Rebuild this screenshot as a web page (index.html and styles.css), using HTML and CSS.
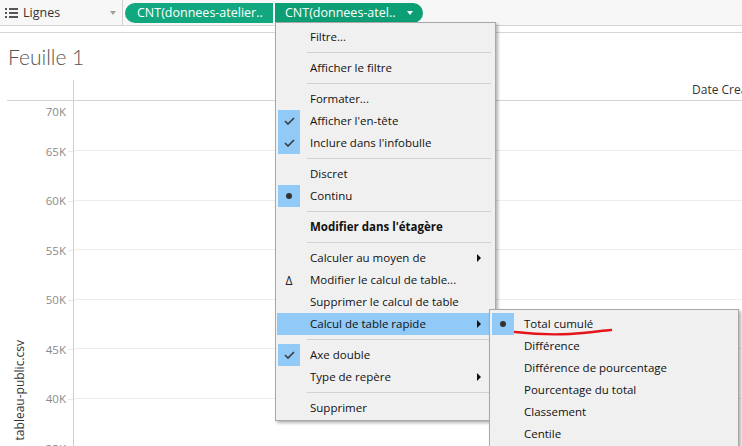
FILE: index.html
```html
<!DOCTYPE html>
<html lang="fr">
<head>
<meta charset="utf-8">
<title>Feuille 1</title>
<link rel="stylesheet" href="styles.css">
</head>
<body>
<div class="app">
  <div class="topbar">
    <div class="shelf-label">
      <svg class="list-icon" width="13" height="10" viewBox="0 0 13 10">
        <rect x="0" y="0" width="2" height="2" fill="#555"/><rect x="4" y="0" width="9" height="2" fill="#555"/>
        <rect x="0" y="4" width="2" height="2" fill="#555"/><rect x="4" y="4" width="9" height="2" fill="#555"/>
        <rect x="0" y="8" width="2" height="2" fill="#555"/><rect x="4" y="8" width="9" height="2" fill="#555"/>
      </svg>
      <span class="shelf-name">Lignes</span>
      <span class="shelf-arrow"></span>
    </div>
    <div class="pills">
      <div class="pill pill-left">CNT(donnees-atelier..</div>
      <div class="pill pill-right">CNT(donnees-atel.. <span class="pill-arrow"></span></div>
    </div>
  </div>
  <div class="strip"></div>
  <div class="sheet">
    <h1 class="sheet-title">Feuille 1</h1>
    <div class="chart">
      <div class="head-left"></div>
      <div class="head-right"><span class="col-title">Date Creation</span></div>
      <div class="axis-pane">
        <div class="axis-title-col"><span class="axis-title">tableau-public.csv</span></div>
        <div class="axis-labels">
          <div class="tick tick-top"><span>70K</span></div>
          <div class="tick"><span>65K</span><i></i></div>
          <div class="tick"><span>60K</span><i></i></div>
          <div class="tick"><span>55K</span><i></i></div>
          <div class="tick"><span>50K</span><i></i></div>
          <div class="tick"><span>45K</span><i></i></div>
          <div class="tick"><span>40K</span><i></i></div>
          <div class="tick"><span>35K</span><i></i></div>
        </div>
      </div>
      <div class="plot">
        <div class="gridrow"></div><div class="gridrow"></div><div class="gridrow"></div>
        <div class="gridrow"></div><div class="gridrow"></div><div class="gridrow"></div>
        <div class="gridrow"></div>
      </div>
    </div>
  </div>

  <div class="menu main-menu">
    <div class="item"><span class="ico"></span><span class="label">Filtre...</span></div>
    <div class="sep"></div>
    <div class="item"><span class="ico"></span><span class="label">Afficher le filtre</span></div>
    <div class="sep"></div>
    <div class="item"><span class="ico"></span><span class="label">Formater...</span></div>
    <div class="item"><span class="ico checked"><svg width="11" height="8" viewBox="0 0 11 8"><polyline points="1,4 4,7 10,1" fill="none" stroke="#3a3a3a" stroke-width="1.6"/></svg></span><span class="label">Afficher l'en-tête</span></div>
    <div class="item"><span class="ico checked"><svg width="11" height="8" viewBox="0 0 11 8"><polyline points="1,4 4,7 10,1" fill="none" stroke="#3a3a3a" stroke-width="1.6"/></svg></span><span class="label">Inclure dans l'infobulle</span></div>
    <div class="sep"></div>
    <div class="item"><span class="ico"></span><span class="label">Discret</span></div>
    <div class="item"><span class="ico checked"><span class="dot"></span></span><span class="label">Continu</span></div>
    <div class="sep"></div>
    <div class="item"><span class="ico"></span><span class="label bold">Modifier dans l'étagère</span></div>
    <div class="sep"></div>
    <div class="item"><span class="ico"></span><span class="label">Calculer au moyen de</span><span class="sub-arrow"></span></div>
    <div class="item"><span class="ico delta">Δ</span><span class="label">Modifier le calcul de table...</span></div>
    <div class="item"><span class="ico"></span><span class="label">Supprimer le calcul de table</span></div>
    <div class="item active"><span class="ico"></span><span class="label">Calcul de table rapide</span><span class="sub-arrow"></span></div>
    <div class="sep"></div>
    <div class="item"><span class="ico checked"><svg width="11" height="8" viewBox="0 0 11 8"><polyline points="1,4 4,7 10,1" fill="none" stroke="#3a3a3a" stroke-width="1.6"/></svg></span><span class="label">Axe double</span></div>
    <div class="item"><span class="ico"></span><span class="label">Type de repère</span><span class="sub-arrow"></span></div>
    <div class="sep"></div>
    <div class="item"><span class="ico"></span><span class="label">Supprimer</span></div>
  </div>

  <div class="menu sub-menu">
    <div class="item"><span class="ico checked"><span class="dot"></span></span><span class="label">Total cumulé</span></div>
    <div class="item"><span class="ico"></span><span class="label">Différence</span></div>
    <div class="item"><span class="ico"></span><span class="label">Différence de pourcentage</span></div>
    <div class="item"><span class="ico"></span><span class="label">Pourcentage du total</span></div>
    <div class="item"><span class="ico"></span><span class="label">Classement</span></div>
    <div class="item"><span class="ico"></span><span class="label">Centile</span></div>
  </div>

  <svg class="scribble" width="104" height="12" viewBox="0 0 104 12">
    <path d="M3,5 C20,7 40,8 58,7 C75,6 88,4 99,3" fill="none" stroke="#e3141b" stroke-width="2.4" stroke-linecap="round"/>
  </svg>
</div>
</body>
</html>
```

FILE: styles.css
```css
* { box-sizing: border-box; }
html, body { margin: 0; padding: 0; }
body {
  width: 742px;
  height: 446px;
  overflow: hidden;
  background: #ffffff;
  font-family: "Open Sans", "Noto Sans", sans-serif;
  color: #333;
}
.app { position: relative; width: 742px; height: 446px; overflow: hidden; }

/* top shelf */
.topbar {
  height: 26px;
  display: flex;
  background: #f7f7f7;
  border-bottom: 1px solid #d6d6d6;
}
.shelf-label {
  width: 123px;
  display: flex;
  align-items: center;
  padding-left: 5px;
  border-right: 1px solid #d0d0d0;
}
.list-icon { display: block; margin-right: 5px; }
.shelf-name { font-size: 12.5px; color: #333; }
.shelf-arrow {
  margin-left: auto;
  margin-right: 6px;
  width: 0; height: 0;
  border-left: 3.5px solid transparent;
  border-right: 3.5px solid transparent;
  border-top: 4px solid #a0a0a0;
}
.pills { display: flex; align-items: center; padding-left: 2px; gap: 2px; }
.pill {
  height: 20px;
  width: 148px;
  display: flex;
  align-items: center;
  color: #fff;
  font-size: 12.5px;
  white-space: nowrap;
}
.pill-left { background: #12a87f; border-radius: 10px 0 0 10px; padding-left: 12px; }
.pill-right { background: #0c9e75; border-radius: 0 10px 10px 0; padding-left: 10px; }
.pill-arrow {
  margin-left: 11px;
  width: 0; height: 0;
  border-left: 3.5px solid transparent;
  border-right: 3.5px solid transparent;
  border-top: 4px solid #fff;
}
.strip { height: 7px; background: #ffffff; border-bottom: 1px solid #d6d6d6; }

/* sheet */
.sheet { padding-left: 7px; }
.sheet-title {
  margin: 0;
  height: 47px;
  padding-top: 11px;
  padding-left: 1px;
  font-family: Lato, "Open Sans", sans-serif;
  font-weight: 300;
  font-size: 21px;
  line-height: 26px;
  color: #555;
}
.chart {
  display: grid;
  grid-template-columns: 66px 1fr;
  grid-template-rows: 21px 400px;
}
.head-left { border-bottom: 1px solid #d4d4d4; }
.head-right {
  border-left: 1px solid #cfcfcf;
  border-bottom: 1px solid #d4d4d4;
  padding-left: 618px;
  display: flex;
  align-items: flex-end;
  padding-bottom: 2px;
  white-space: nowrap;
  overflow: hidden;
}
.col-title { font-size: 12px; color: #333; line-height: 16px; }
.axis-pane { display: flex; }
.axis-title-col {
  width: 28px;
  padding-top: 239px;
  padding-left: 5px;
}
.axis-title {
  display: block;
  writing-mode: vertical-rl;
  transform: rotate(180deg);
  font-size: 12px;
  line-height: 16px;
  color: #333;
  white-space: nowrap;
}
.axis-labels { flex: 1; display: flex; flex-direction: column; }
.tick {
  height: 49.5px;
  flex: none;
  display: flex;
  align-items: center;
  justify-content: flex-end;
  font-size: 11.5px;
  color: #8a8a8a;
}
.tick i { display: block; width: 5px; height: 1px; background: #e8e8e8; margin-left: 2px; }
.tick span { line-height: 16px; }
.tick-top { height: 25.75px; align-items: flex-start; padding-top: 3px; padding-right: 7px; }
.plot { border-left: 1px solid #cfcfcf; display: flex; flex-direction: column; }
.gridrow { height: 49.5px; flex: none; border-bottom: 1px solid #ededed; }
.gridrow:first-child { height: 50px; }

/* menus */
.menu {
  position: absolute;
  background: #f0f0f0;
  border: 1px solid #a8a8a8;
  box-shadow: 2px 2px 3px rgba(0, 0, 0, 0.3);
  font-size: 11.5px;
  color: #111;
}
.main-menu { left: 275px; top: 22px; width: 221px; padding: 3px 1px 1px 1px; }
.sub-menu { left: 489px; top: 309px; width: 250px; height: 160px; padding: 3px 1px 1px 1px; }
.item {
  height: 22px;
  display: flex;
  align-items: center;
  padding-left: 1px;
  white-space: nowrap;
}
.item.active { background: #91c9f7; }
.ico {
  width: 22px;
  height: 22px;
  flex: none;
  display: flex;
  align-items: center;
  justify-content: center;
  margin-right: 10px;
}
.ico.checked { background: #91c9f7; }
.dot { width: 6px; height: 6px; border-radius: 50%; background: #333; }
.delta { font-size: 12px; color: #222; }
.label { flex: 1; padding-bottom: 1px; }
.bold { font-weight: 700; }
.sub-arrow {
  margin-right: 13px;
  width: 0; height: 0;
  border-top: 4px solid transparent;
  border-bottom: 4px solid transparent;
  border-left: 4px solid #111;
}
.sep { height: 9px; margin: 0 3px 0 30px; display: flex; align-items: center; }
.sep::after { content: ""; display: block; width: 100%; height: 1px; background: #d2d2d2; }

.scribble { position: absolute; left: 512px; top: 327px; }
```
